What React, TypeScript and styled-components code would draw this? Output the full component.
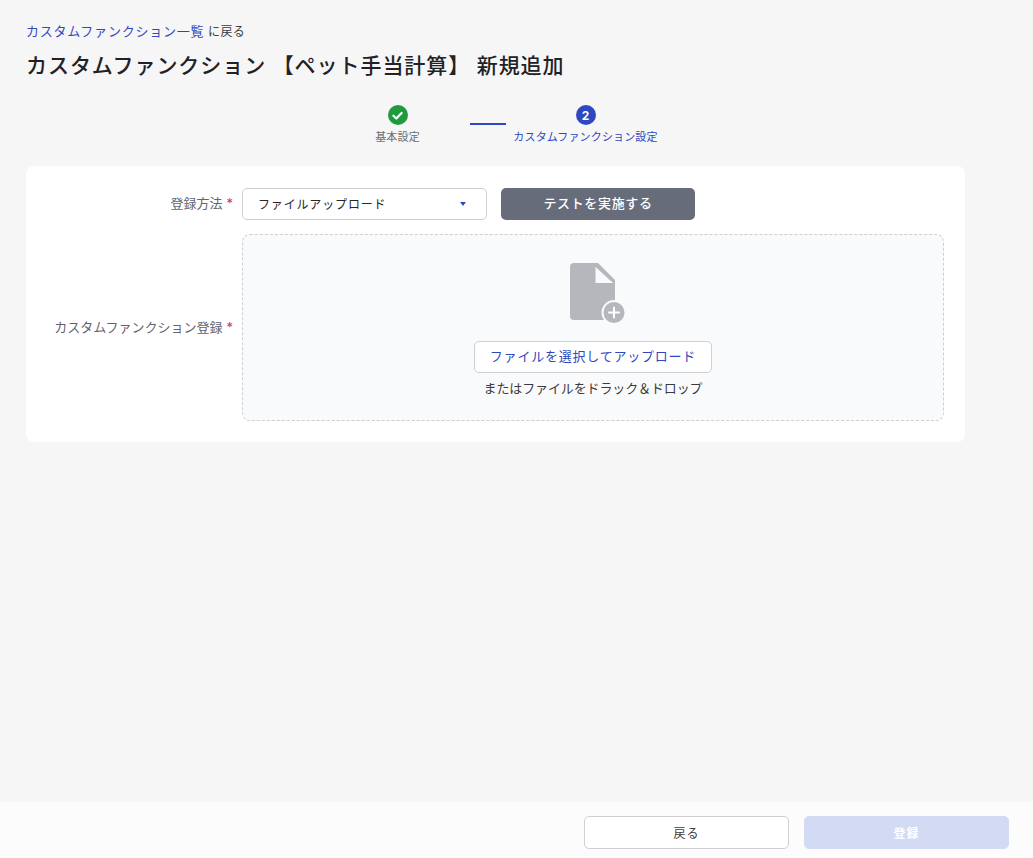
import styled, { createGlobalStyle } from "styled-components";

const GlobalStyle = createGlobalStyle`
    html, body {
        margin: 0;
        padding: 0;
        height: 100%;
    }
    body {
        background-color: #f6f6f6;
        color: #26262b;
        font-family: Inter, "Noto Sans CJK JP", sans-serif;
    }
    * {
        box-sizing: border-box;
    }
`;

const Page = styled.div`
    display: flex;
    flex-direction: column;
    min-height: 100vh;
`;
const Main = styled.main`
    flex: 1;
    padding: 23px 68px 0 26px;
`;
const Breadcrumb = styled.div`
    font-size: 12px;
    line-height: 17px;
    letter-spacing: 0.03em;
    color: #3a3a40;
`;
const BackLink = styled.a`
    color: #2f48c0;
    font-size: 13px;
    letter-spacing: 0.06em;
    text-decoration: none;
`;
const Title = styled.h1`
    margin: 11px 0 0;
    font-size: 21px;
    line-height: 30px;
    font-weight: 500;
    letter-spacing: 0.045em;
    color: #222226;
`;
const Stepper = styled.div`
    display: flex;
    justify-content: center;
    align-items: flex-start;
    margin-top: 24px;
    padding-right: 8px;
`;
const Step = styled.div`
    display: flex;
    flex-direction: column;
    align-items: center;
    gap: 5px;
    width: 145px;
`;
const StepCircle = styled.div<{ $done?: boolean }>`
    display: flex;
    align-items: center;
    justify-content: center;
    width: 20px;
    height: 20px;
    border-radius: 50%;
    background-color: ${(p) => (p.$done ? "#1f9a3f" : "#2f48c0")};
    color: #ffffff;
    font-size: 12px;
    font-weight: 700;
`;
const StepLabel = styled.div<{ $active?: boolean }>`
    font-size: 11px;
    line-height: 14px;
    white-space: nowrap;
    letter-spacing: 0.014em;
    color: ${(p) => (p.$active ? "#2f48c0" : "#6d6d72")};
`;
const StepLine = styled.div`
    width: 36px;
    height: 2px;
    margin: 18px 7px 0 0;
    background-color: #2f48c0;
`;
const Card = styled.section`
    display: grid;
    grid-template-columns: 207px 1fr;
    gap: 14px 9px;
    align-items: center;
    margin-top: 22px;
    padding: 22px 21px 21px 0;
    background-color: #ffffff;
    border-radius: 8px;
`;
const Label = styled.label<{ $top?: boolean }>`
    padding-bottom: ${(p) => (p.$top ? "4px" : "2px")};
    text-align: right;
    font-size: 13px;
    color: #62636e;
`;
const Required = styled.span`
    margin-left: 4px;
    color: #e0323c;
`;
const Controls = styled.div`
    display: flex;
    gap: 14px;
`;
const Select = styled.div`
    display: flex;
    align-items: center;
    justify-content: space-between;
    width: 245px;
    height: 32px;
    padding: 0 20px 2px 15px;
    background-color: #ffffff;
    border: 1px solid #cfcfd2;
    border-radius: 5px;
    font-size: 12px;
    letter-spacing: 0.07em;
    color: #26262b;
`;
const Caret = styled.span`
    width: 0;
    height: 0;
    margin-top: 2px;
    border-left: 3px solid transparent;
    border-right: 3px solid transparent;
    border-top: 4px solid #2f48c0;
`;
const TestButton = styled.button`
    width: 194px;
    height: 32px;
    padding-bottom: 4px;
    border: none;
    border-radius: 5px;
    background-color: #676c7a;
    color: #ffffff;
    font-family: inherit;
    font-size: 13px;
    font-weight: 500;
    letter-spacing: 0.05em;
`;
const DropZone = styled.div`
    display: flex;
    flex-direction: column;
    align-items: center;
    height: 187px;
    padding-top: 28px;
    background-color: #f9fafc;
    border: 1px dashed #cfcfd2;
    border-radius: 8px;
`;
const FileIcon = styled.svg`
    display: block;
    width: 58px;
    height: 64px;
    margin-left: 11px;
`;
const UploadButton = styled.button`
    width: 238px;
    height: 32px;
    margin-top: 14px;
    padding-bottom: 4px;
    background-color: #ffffff;
    border: 1px solid #cfcfd2;
    border-radius: 5px;
    color: #2f48c0;
    font-family: inherit;
    font-size: 13px;
    letter-spacing: 0.06em;
`;
const DropHint = styled.p`
    margin: 7px 0 0;
    font-size: 13px;
    line-height: 17px;
    letter-spacing: -0.01em;
    color: #3a3a40;
`;
const Footer = styled.footer`
    display: flex;
    justify-content: flex-end;
    gap: 15px;
    height: 56px;
    padding: 14px 24px 0 0;
    background-color: #fcfcfc;
`;
const FooterButton = styled.button<{ $primary?: boolean }>`
    width: 205px;
    height: 33px;
    border-radius: 5px;
    border: 1px solid ${(p) => (p.$primary ? "#d3daf3" : "#cfcfd2")};
    background-color: ${(p) => (p.$primary ? "#d3daf3" : "#ffffff")};
    color: ${(p) => (p.$primary ? "#ffffff" : "#3a3a40")};
    font-family: inherit;
    font-size: 12px;
    font-weight: ${(p) => (p.$primary ? 600 : 400)};
    letter-spacing: 0.08em;
`;

export default function App() {
    return (
        <Page>
            <GlobalStyle />
            <Main>
                <Breadcrumb>
                    <BackLink href="#">カスタムファンクション一覧</BackLink> に戻る
                </Breadcrumb>
                <Title>カスタムファンクション 【ペット手当計算】 新規追加</Title>
                <Stepper>
                    <Step>
                        <StepCircle $done>
                            <svg width="13" height="13" viewBox="0 0 12 12" fill="none">
                                <path d="M2.2 6.2 4.9 8.8 9.8 3.6" stroke="#fff" strokeWidth="2" strokeLinecap="round" strokeLinejoin="round" />
                            </svg>
                        </StepCircle>
                        <StepLabel>基本設定</StepLabel>
                    </Step>
                    <StepLine />
                    <Step>
                        <StepCircle>2</StepCircle>
                        <StepLabel $active>カスタムファンクション設定</StepLabel>
                    </Step>
                </Stepper>
                <Card>
                    <Label $top>
                        登録方法<Required>*</Required>
                    </Label>
                    <Controls>
                        <Select>
                            ファイルアップロード
                            <Caret />
                        </Select>
                        <TestButton>テストを実施する</TestButton>
                    </Controls>
                    <Label>
                        カスタムファンクション登録<Required>*</Required>
                    </Label>
                    <DropZone>
                        <FileIcon viewBox="0 0 58 64">
                            <path d="M4 0H28L45 17V53a4 4 0 0 1-4 4H4a4 4 0 0 1-4-4V4a4 4 0 0 1 4-4Z" fill="#b5b7bc" />
                            <path d="M25.5 4V20H43Z" fill="#f9fafc" />
                            <circle cx="44" cy="49.5" r="12.5" fill="#f9fafc" />
                            <circle cx="44" cy="49.5" r="10.5" fill="#b5b7bc" />
                            <path d="M44 44.5v10M39 49.5h10" stroke="#fff" strokeWidth="2" strokeLinecap="round" />
                        </FileIcon>
                        <UploadButton>ファイルを選択してアップロード</UploadButton>
                        <DropHint>またはファイルをドラック＆ドロップ</DropHint>
                    </DropZone>
                </Card>
            </Main>
            <Footer>
                <FooterButton>戻る</FooterButton>
                <FooterButton $primary>登録</FooterButton>
            </Footer>
        </Page>
    );
}
